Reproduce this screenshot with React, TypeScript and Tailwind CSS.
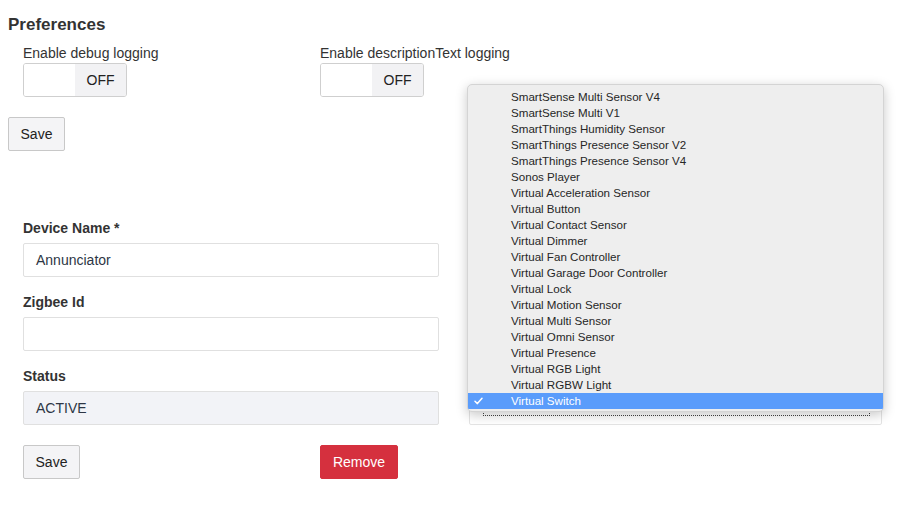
import React from 'react';

const deviceTypes = [
    'SmartSense Multi Sensor V4',
    'SmartSense Multi V1',
    'SmartThings Humidity Sensor',
    'SmartThings Presence Sensor V2',
    'SmartThings Presence Sensor V4',
    'Sonos Player',
    'Virtual Acceleration Sensor',
    'Virtual Button',
    'Virtual Contact Sensor',
    'Virtual Dimmer',
    'Virtual Fan Controller',
    'Virtual Garage Door Controller',
    'Virtual Lock',
    'Virtual Motion Sensor',
    'Virtual Multi Sensor',
    'Virtual Omni Sensor',
    'Virtual Presence',
    'Virtual RGB Light',
    'Virtual RGBW Light',
    'Virtual Switch',
];

const selected = 'Virtual Switch';

const Toggle = ({label}: {label: string}) => (
    <div className="flex flex-col">
        <div className="text-[14px] leading-5">{label}</div>
        <div className="flex w-[104px] h-[34px] border border-[#cfcfcf] rounded-[3px] overflow-hidden">
            <div className="w-[51px] bg-white"/>
            <div className="flex-1 bg-[#f2f2f4] flex items-center justify-center text-[14px] text-[#222]">OFF</div>
        </div>
    </div>
);

const Field = ({label, value, disabled}: {label: string, value?: string, disabled?: boolean}) => (
    <div className="flex flex-col">
        <div className="text-[14px] leading-5 font-bold text-[#333]">{label}</div>
        <div
            className={`mt-[5px] h-[34px] border border-[#e0e0e0] rounded-[2px] flex items-center px-[12px] text-[14px] text-[#2d3645] ${disabled ? 'bg-[#f2f3f7]' : 'bg-white'}`}
        >
            {value}
        </div>
    </div>
);

const Button = ({children, className}: {children: React.ReactNode, className?: string}) => (
    <button
        type="button"
        className={`h-[34px] border rounded-[2px] text-[14px] ${className ?? ''}`}
    >
        {children}
    </button>
);

export default function App() {
    return (
        <div className="w-[904px] h-[512px] bg-white text-[#333] overflow-hidden" style={{fontFamily: '"Liberation Sans", Arial, sans-serif'}}>
            <div className="pl-[8px] pt-[15px]">
                <h3 className="text-[17px] leading-5 font-bold text-[#333]">Preferences</h3>

                {/* toggles */}
                <div className="flex pl-[15px] mt-[8px]">
                    <div className="w-[297px]">
                        <Toggle label="Enable debug logging"/>
                    </div>
                    <div>
                        <Toggle label="Enable descriptionText logging"/>
                    </div>
                </div>

                <Button className="mt-[20px] w-[57px] bg-[#f4f4f6] border-[#c8c8c8] text-[#222]">Save</Button>
            </div>

            {/* device form */}
            <div className="pl-[23px] mt-[67px] w-[885px]">
                <div className="grid grid-cols-2 gap-x-[30px]">
                    <div className="flex flex-col gap-[15px]">
                        <Field label="Device Name *" value="Annunciator"/>
                        <Field label="Zigbee Id"/>
                        <Field label="Status" value="ACTIVE" disabled/>
                    </div>
                    <div className="flex flex-col justify-end">
                        <div className="relative h-[34px] mr-[3px]">
                            <div className="absolute inset-0 border border-[#e4e4e4] rounded-[2px] bg-white">
                                <div className="absolute left-[13px] right-[11px] top-[2px] bottom-[8px] border border-dotted border-[#444]"/>
                            </div>

                            {/* open select menu */}
                            <div className="absolute left-[-2px] top-[-307px] w-[417px] h-[328px] bg-[#eeeeee] rounded-[5px] border border-[#d4d4d4] shadow-[0_3px_12px_rgba(0,0,0,0.22)] pt-[4px] overflow-hidden">
                                {deviceTypes.map((t) => (
                                    <div
                                        key={t}
                                        className={`h-[16px] flex items-center text-[11.6px] leading-4 ${t === selected ? 'bg-[#5a9cfb] text-white' : 'text-[#262626]'}`}
                                    >
                                        <div className="w-[43px] pl-[6px]">
                                            {t === selected && (
                                                <svg width="9" height="8" viewBox="0 0 9 8" fill="none" className="block">
                                                    <path d="M1 4.3 L3.4 6.6 L8 1.2" stroke="white" strokeWidth="1.5" strokeLinecap="round" strokeLinejoin="round"/>
                                                </svg>
                                            )}
                                        </div>
                                        <span>{t}</span>
                                    </div>
                                ))}
                            </div>
                        </div>
                    </div>
                </div>

                <div className="flex mt-[20px]">
                    <div className="w-[297px]">
                        <Button className="w-[57px] bg-[#f4f4f6] border-[#c8c8c8] text-[#222]">Save</Button>
                    </div>
                    <Button className="w-[78px] bg-[#d5303e] border-[#d5303e] text-white">Remove</Button>
                </div>
            </div>
        </div>
    );
}
